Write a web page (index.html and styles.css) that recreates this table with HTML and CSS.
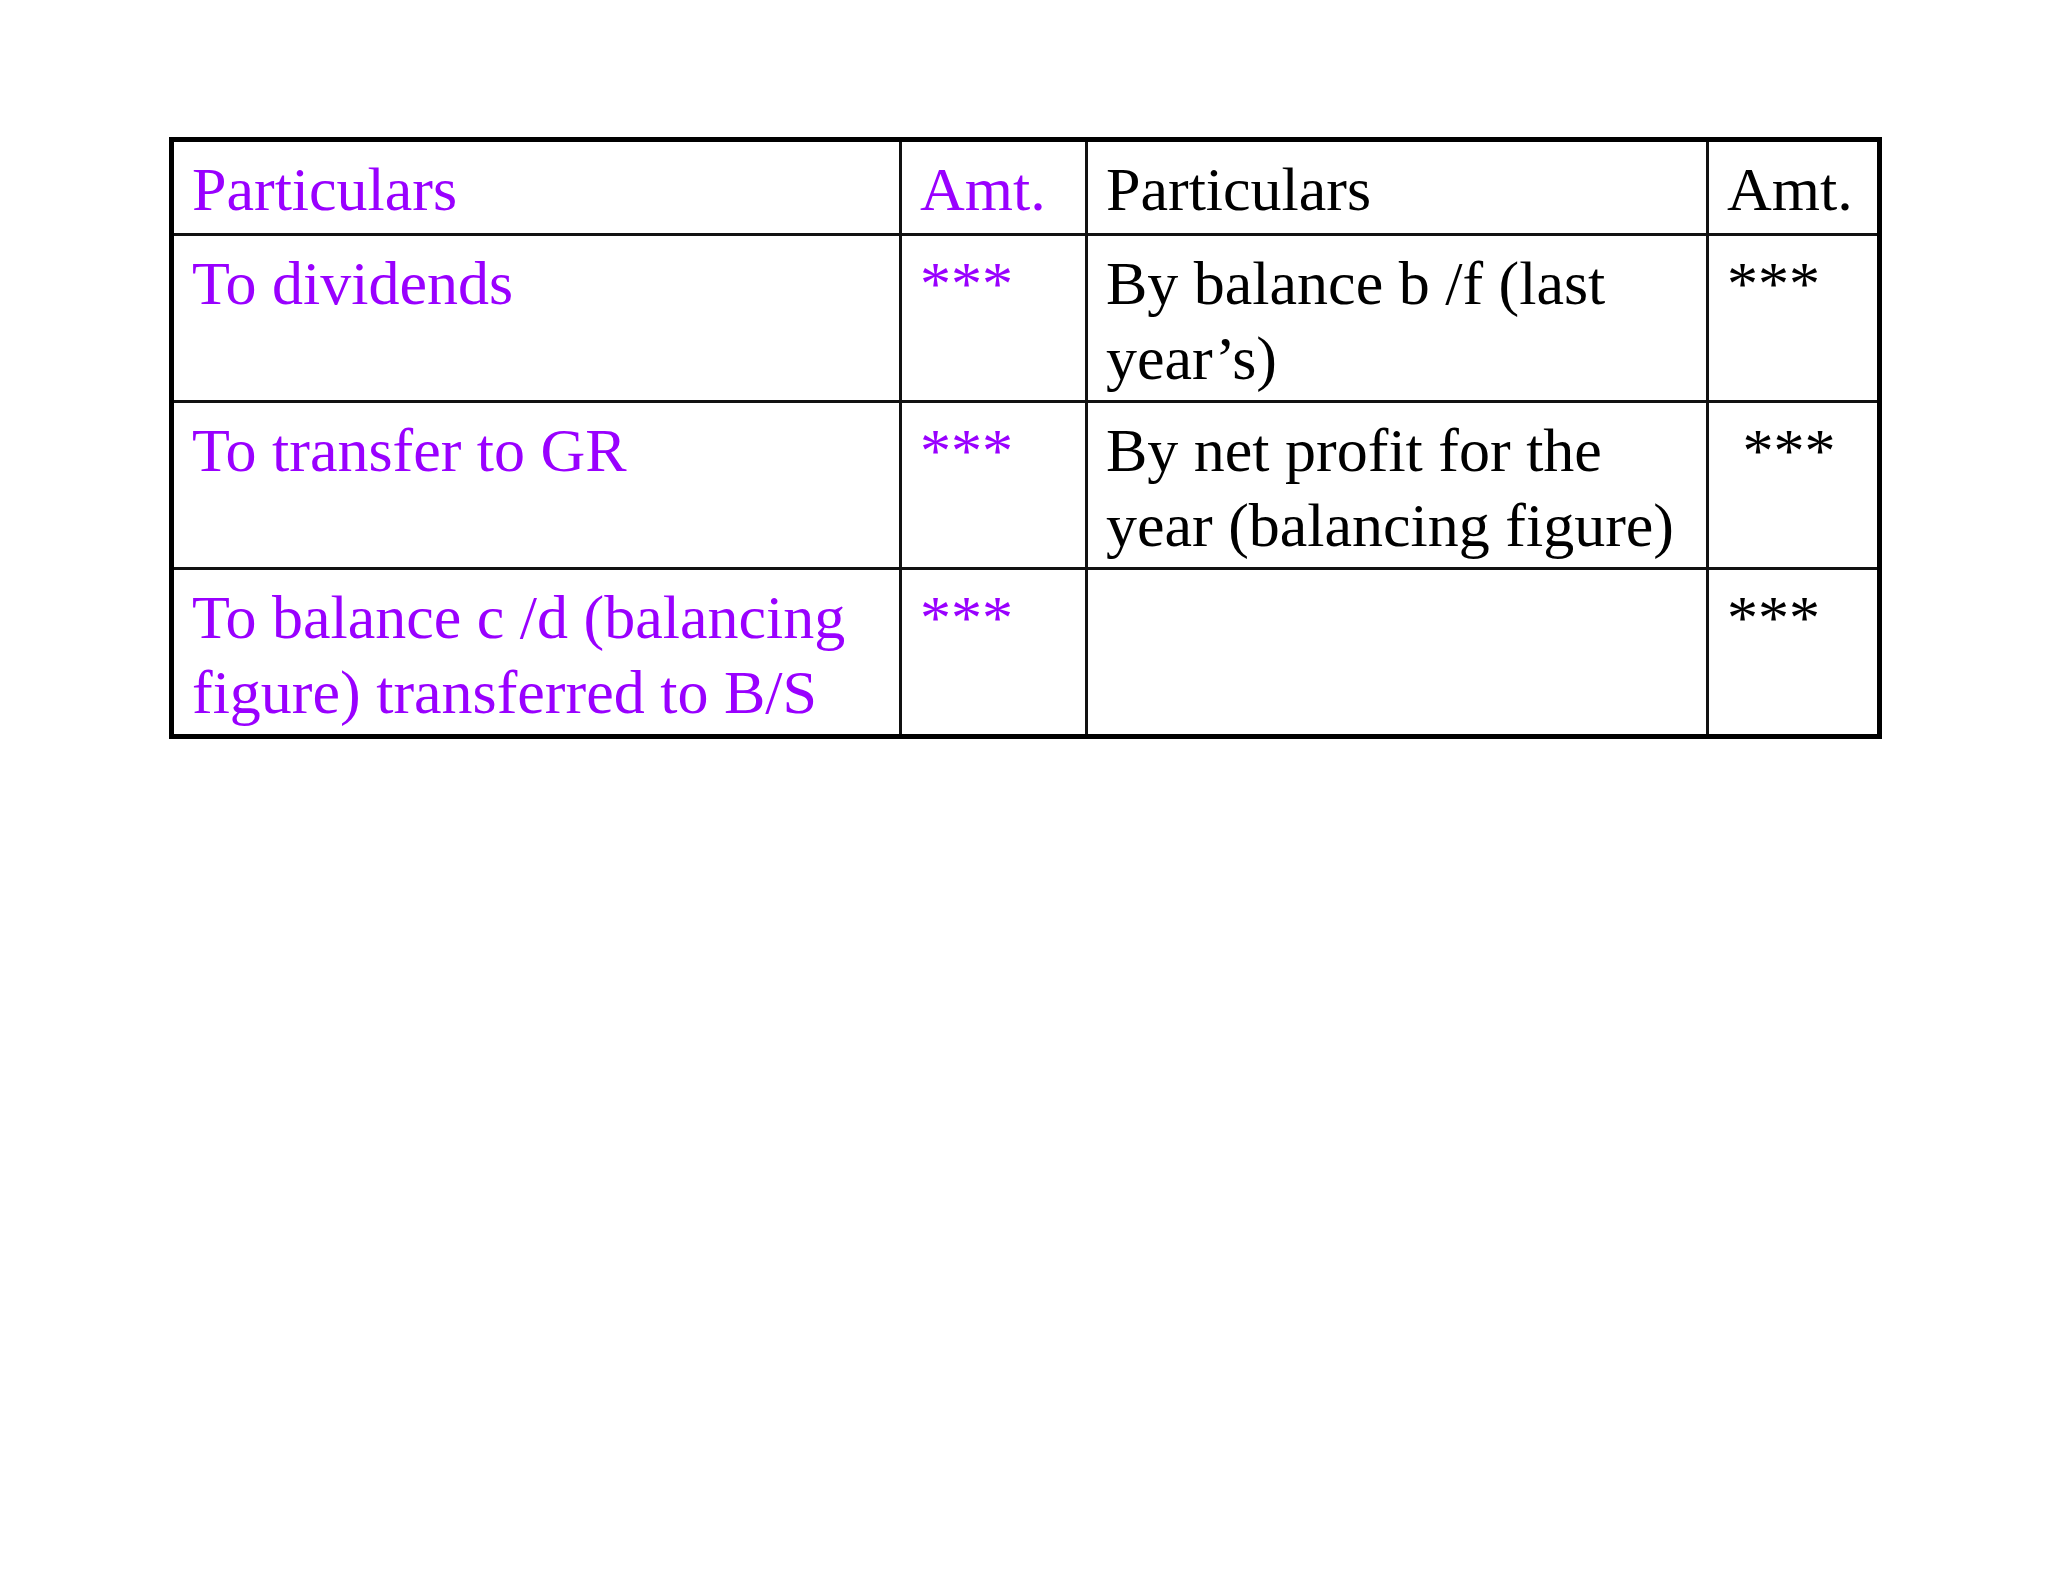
FILE: index.html
```html
<!DOCTYPE html>
<html lang="en">
<head>
<meta charset="utf-8">
<title>Profit and Loss Appropriation Account</title>
<link rel="stylesheet" href="styles.css">
</head>
<body>
<main class="page">
  <div class="ledger" role="table">
    <div class="cell debit" role="columnheader">Particulars</div>
    <div class="cell debit" role="columnheader">Amt.</div>
    <div class="cell credit" role="columnheader">Particulars</div>
    <div class="cell credit last-col" role="columnheader">Amt.</div>

    <div class="cell debit" role="cell">To dividends</div>
    <div class="cell debit" role="cell">***</div>
    <div class="cell credit" role="cell">By balance b /f (last<br>year’s)</div>
    <div class="cell credit last-col" role="cell">***</div>

    <div class="cell debit" role="cell">To transfer to GR</div>
    <div class="cell debit" role="cell">***</div>
    <div class="cell credit" role="cell">By net profit for the<br>year (balancing figure)</div>
    <div class="cell credit last-col" role="cell">&nbsp;***</div>

    <div class="cell debit last-row" role="cell">To balance c /d (balancing<br>figure) transferred to B/S</div>
    <div class="cell debit last-row" role="cell">***</div>
    <div class="cell credit last-row" role="cell"></div>
    <div class="cell credit last-col last-row" role="cell">***</div>
  </div>
</main>
</body>
</html>
```
FILE: styles.css
```css
html, body {
  margin: 0;
  padding: 0;
  background: #ffffff;
}

.page {
  padding: 137px 0 0 169px;
  min-height: 1582px;
  box-sizing: border-box;
}

.ledger {
  display: grid;
  grid-template-columns: 728px 186px 621px 168px;
  grid-template-rows: 94px 167px 167px 164px;
  width: max-content;
  border: 5px solid #000;
  font-family: "Liberation Serif", "Times New Roman", serif;
  font-size: 62px;
  line-height: 74.5px;
}

.cell {
  box-sizing: border-box;
  border-right: 3px solid #111;
  border-bottom: 3px solid #111;
  padding: 10px 10px 0 18px;
  white-space: nowrap;
}

.last-col {
  border-right: none;
}

.last-row {
  border-bottom: none;
}

.debit {
  color: #9900ff;
}

.credit {
  color: #000;
}
```
